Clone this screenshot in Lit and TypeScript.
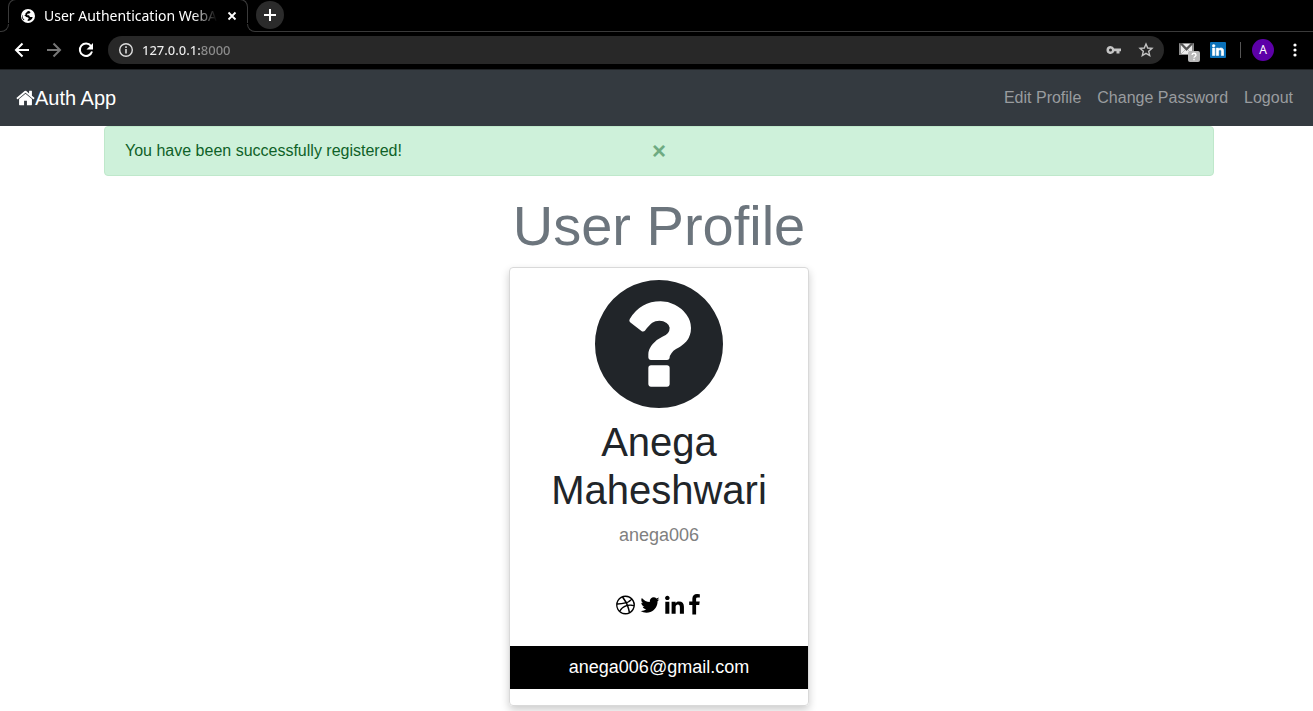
import { LitElement, html, css, svg } from "lit";
import { customElement, state } from "lit/decorators.js";

const HOME =
  "M1472 992v480q0 26-19 45t-45 19h-384v-384h-256v384h-384q-26 0-45-19t-19-45v-480q0-1 .5-3t.5-3l575-474 575 474q1 2 1 6zm223-69l-62 74q-8 9-21 11h-3q-13 0-21-7l-692-577-692 577q-12 8-24 7-13-2-21-11l-62-74q-8-10-7-23.5t11-21.5l719-599q32-26 76-26t76 26l244 204v-195q0-14 9-23t23-9h192q14 0 23 9t9 23v408l219 182q10 8 11 21.5t-7 23.5z";
const QUESTION =
  "M1024 1376v-192q0-14-9-23t-23-9h-192q-14 0-23 9t-9 23v192q0 14 9 23t23 9h192q14 0 23-9t9-23zm256-672q0-88-55.5-163t-138.5-116-170-41q-243 0-371 213-15 24 8 42l132 100q7 6 19 6 16 0 25-12 53-68 86-92 34-24 86-24 48 0 85.5 26t37.5 59q0 38-20 61t-68 45q-63 28-115.5 86.5t-52.5 125.5v36q0 14 9 23t23 9h192q14 0 23-9t9-23q0-19 21.5-49.5t54.5-49.5q32-18 49-28.5t46-35 44.5-48 28-60.5 12.5-81zm384 192q0 209-103 385.5t-279.5 279.5-385.5 103-385.5-103-279.5-279.5-103-385.5 103-385.5 279.5-279.5 385.5-103 385.5 103 279.5 279.5 103 385.5z";
const DRIBBBLE =
  "M1152 1500q-42-241-140-498h-2l-2 1q-16 6-43 16.5t-101 49-137 82-131 114.5-103 148l-15-11q184 150 418 150 132 0 256-52zm-185-607q-21-49-53-111-311 93-673 93-1 7-1 21 0 124 44 236.5t124 201.5q50-89 123.5-166.5t142.5-124.5 130.5-81 99.5-48l37-13q4-1 13-3.5t13-4.5zm-107-212q-120-213-244-378-138 65-234 186t-128 272q302 0 606-80zm684 319q-210-60-409-29 87 239 128 469 111-75 185-189.5t96-250.5zm-803-741q-1 0-2 1 1-1 2-1zm590 145q-185-164-433-164-76 0-155 19 131 170 246 382 69-26 130-60.5t96.5-61.5 65.5-57 37.5-40.5zm223 485q-3-232-149-410l-1 1q-9 12-19 24.5t-43.5 44.5-71 60.5-100 65-131.5 64.5q25 53 44 95 2 5 6.5 17t7.5 17q36-5 74.5-7t73.5-2 69 1.5 64 4 56.5 5.5 48 6.5 36.5 6 25 4.5zm112 7q0 209-103 385.5t-279.5 279.5-385.5 103-385.5-103-279.5-279.5-103-385.5 103-385.5 279.5-279.5 385.5-103 385.5 103 279.5 279.5 103 385.5z";
const TWITTER =
  "M1684 408q-67 98-162 167 1 14 1 42 0 130-38 259.5t-115.5 248.5-184.5 210.5-258 146-323 54.5q-271 0-496-145 35 4 78 4 225 0 401-138-105-2-188-64.5t-114-159.5q33 5 61 5 43 0 85-11-112-23-185.5-111.5t-73.5-205.5v-4q68 38 146 41-66-44-105-115t-39-154q0-88 44-163 121 149 294.5 238.5t371.5 99.5q-8-38-8-74 0-134 94.5-228.5t228.5-94.5q140 0 236 102 109-21 205-78-37 115-142 178 93-10 186-50z";
const LINKEDIN =
  "M477 625v991h-330v-991h330zm21-306q1 73-50.5 122t-135.5 49h-2q-82 0-132-49t-50-122q0-74 51.5-122.5t134.5-48.5 133 48.5 51 122.5zm1166 729v568h-329v-530q0-105-40.5-164.5t-126.5-59.5q-63 0-105.5 34.5t-63.5 85.5q-11 30-11 81v553h-329q2-399 2-647t-1-296l-1-48h329v144h-2q20-32 41-56t56.5-52 87-43.5 114.5-15.5q171 0 275 113.5t104 332.5z";
const FACEBOOK =
  "M1343 12v264h-157q-86 0-116 36t-30 108v189h293l-39 296h-254v759h-306v-759h-255v-296h255v-218q0-186 104-288.5t277-102.5q147 0 228 12z";

const SOCIAL = [
  { name: "Dribbble", path: DRIBBBLE, box: "128 0 1536 1792", width: 19 },
  { name: "Twitter", path: TWITTER, box: "64 0 1664 1792", width: 20 },
  { name: "LinkedIn", path: LINKEDIN, box: "128 0 1536 1792", width: 19 },
  { name: "Facebook", path: FACEBOOK, box: "479 0 1024 1792", width: 13 },
];

@customElement("browser-bar")
class BrowserBar extends LitElement {
  static styles = css`
    :host { display: block; background: #000; color: #fff; font: 14px/20px "Noto Sans", sans-serif; }
    button { display: grid; place-items: center; border: 0; padding: 0; margin: 0; background: none; color: inherit; font: inherit; }
    svg { display: block; }
    .strip { display: flex; height: 32px; align-items: flex-end; overflow: hidden; }
    .foot { box-sizing: border-box; height: 8px; width: 9px; flex: none; border: 0 solid #3a3a3a; border-bottom-width: 1px; }
    .foot-left { border-right-width: 1px; border-radius: 0 0 8px 0; margin-right: -1px; }
    .foot-right { border-left-width: 1px; border-radius: 0 0 0 8px; margin-left: -1px; }
    .tab { box-sizing: border-box; display: flex; align-items: center; align-self: flex-start; width: 240px; height: 32px; margin-top: -1px; padding: 0 7px 0 11px; border: 1px solid #3a3a3a; border-bottom: 0; border-radius: 8px 8px 0 0; clip-path: inset(0 0 8px 0); }
    .title { flex: 1; min-width: 0; margin: 0 7px 0 8px; overflow: hidden; white-space: nowrap; -webkit-mask-image: linear-gradient(90deg, #000 86%, transparent); mask-image: linear-gradient(90deg, #000 86%, transparent); }
    .rest { flex: 1; height: 32px; box-sizing: border-box; border-bottom: 1px solid #3a3a3a; }
    .new { width: 28px; height: 28px; border-radius: 50%; background: #2b2b2b; margin-top: 1px; }
    .tools { display: flex; align-items: center; height: 38px; padding: 0 9px 1px 12px; box-sizing: border-box; border-bottom: 1px solid #202326; }
    .nav { display: flex; gap: 12px; margin-right: 12px; }
    .nav button { width: 20px; height: 20px; }
    .dim { color: #777; }
    .address { flex: 1; display: flex; align-items: center; height: 28px; margin: 0; padding: 0 9px 0 10px; border-radius: 14px; background: #282828; color: #c4c4c4; }
    .url { flex: 1; min-width: 0; height: 20px; border: 0; padding: 0; margin: 0 8px; outline: none; font: 500 13px/20px "Noto Sans", sans-serif; color: transparent; caret-color: #fff; background: linear-gradient(90deg, #eee 58px, #8c8c8c 58px); -webkit-background-clip: text; background-clip: text; }
    .star { margin-left: 14px; }
    .extensions { display: flex; align-items: center; margin-left: 13px; }
    .mail { width: 24px; }
    .linked { margin-left: 9px; }
    .divider { width: 1px; height: 16px; margin: 0 11px 0 14px; background: #555; }
    .avatar { width: 22px; height: 22px; border-radius: 50%; background: #5d00a8; font-size: 12px; line-height: 16px; }
    .menu { width: 18px; margin-left: 12px; }
  `;

  render() {
    return html`
      <div class="strip">
        <div class="foot foot-left"></div>
        <div class="tab">
          <svg width="16" height="16" viewBox="0 0 16 16">
            <circle cx="8" cy="8" r="7" fill="#fff" />
            <path d="M8 3.1q1.800 0 2.600 1.200l-1.200 1.300-2 .2-.3 1.500H9l1 1.700h2.700q-.3 2.600-2.700 3.600L7.700 13v-1.300l1-.9-.5-1.300-2-.5-2-2H2.300q-.1 3 2.200 5l-1 .3Q1.400 10 2 7h3.400V5.400Z" fill="#000" />
          </svg>
          <span class="title">User Authentication WebApp</span>
          <button aria-label="Close tab">
            <svg width="16" height="16" viewBox="0 0 16 16" stroke="#fff" stroke-width="1.800" fill="none"><path d="m4.500 4.500 7 7m0-7-7 7" /></svg>
          </button>
        </div>
        <div class="foot foot-right"></div>
        <div class="rest">
          <button class="new" aria-label="New tab">
            <svg width="14" height="14" viewBox="0 0 14 14" stroke="#fff" stroke-width="2"><path d="M7 1v12M1 7h12" /></svg>
          </button>
        </div>
      </div>
      <div class="tools">
        <div class="nav">
          <button aria-label="Back">
            <svg width="16" height="16" viewBox="0 0 16 16" stroke="currentColor" stroke-width="2" fill="none"><path d="M15 8H2m6.500-6.500L2 8l6.500 6.500" /></svg>
          </button>
          <button class="dim" aria-label="Forward">
            <svg width="16" height="16" viewBox="0 0 16 16" stroke="currentColor" stroke-width="2" fill="none"><path d="M1 8h13M7.500 1.500 14 8l-6.500 6.500" /></svg>
          </button>
          <button aria-label="Reload">
            <svg width="16" height="16" viewBox="0 0 16 16"><path d="M13 4A6.200 6.200 0 1 0 14 9.500" stroke="#fff" stroke-width="2" fill="none" /><path d="M15 1v6.500H8.500Z" fill="#fff" /></svg>
          </button>
        </div>
        <form class="address" @submit=${(e: Event) => e.preventDefault()}>
          <svg width="16" height="16" viewBox="0 0 16 16"><circle cx="8" cy="8" r="6.300" stroke="#ddd" stroke-width="1.400" fill="none" /><path d="M7.200 7h1.600v4.500H7.200zm0-2.700h1.600v1.600H7.200z" fill="#ddd" /></svg>
          <input class="url" aria-label="Address" value="127.0.0.1:8000" />
          <button type="button" aria-label="Saved passwords">
            <svg width="18" height="16" viewBox="0 0 18 16"><path fill="#c4c4c4" fill-rule="evenodd" d="M5.500 4a4 4 0 1 0 3.800 5.200h2.200V11.500h3V9.200h1.500V6.600H9.200A4 4 0 0 0 5.500 4Zm0 2.500a1.500 1.500 0 1 1 0 3 1.500 1.500 0 0 1 0-3Z" /></svg>
          </button>
          <button type="button" class="star" aria-label="Bookmark">
            <svg width="18" height="18" viewBox="0 0 18 18"><path d="m9 3 1.700 4 4.300.4-3.300 2.900 1 4.300L9 12.300l-3.700 2.300 1-4.300L3 7.400 7.300 7Z" fill="none" stroke="#c4c4c4" stroke-width="1.400" /></svg>
          </button>
        </form>
        <div class="extensions">
          <button class="mail" aria-label="Mail">
            <svg width="24" height="24" viewBox="0 0 24 24"><path d="M2 5h15v12H2Z" fill="#8a8a8a" /><path d="M4 6h11v10H4Z" fill="#eee" /><path d="m2 5 7.500 8L17 5h-3L9.500 9.500 5 5Z" fill="#555" /><path d="m4 16 4-4m7 4-4-4" stroke="#bbb" /><rect x="11" y="13" width="12" height="11" rx="2" fill="#b8b8b8" /><path d="M15 17q.2-1.700 2-1.700t2 1.700q0 .8-1 1.500t-1 1.300m0 1v1.500" stroke="#fff" stroke-width="1.400" fill="none" /></svg>
          </button>
          <button class="linked" aria-label="LinkedIn">
            <svg width="16" height="16" viewBox="0 0 16 16"><rect width="16" height="16" rx="1" fill="#0a70b8" /><svg x="2" y="2" width="12" height="12" viewBox="96 100 1600 1560"><path fill="#fff" stroke="#fff" stroke-width="70" d=${LINKEDIN} /></svg></svg>
          </button>
          <span class="divider"></span>
          <button class="avatar" aria-label="Account">A</button>
          <button class="menu" aria-label="Browser menu">
            <svg width="4" height="16" viewBox="0 0 4 16" fill="#fff"><circle cx="2" cy="3" r="1.600" /><circle cx="2" cy="8" r="1.600" /><circle cx="2" cy="13" r="1.600" /></svg>
          </button>
        </div>
      </div>
    `;
  }
}

@customElement("app-root")
class AppRoot extends LitElement {
  static styles = css`
    :host { display: block; min-height: 100vh; background: #fff; color: #212529; font: 16px/24px "Liberation Sans", Arial, sans-serif; }
    a { color: inherit; text-decoration: none; }
    svg { display: block; }
    .navbar { display: flex; align-items: center; justify-content: space-between; height: 56px; padding: 0 20px 0 16px; background: #343a40; }
    .brand { display: flex; align-items: center; color: #fff; font-size: 20px; line-height: 30px; }
    .links { display: flex; gap: 16px; color: #999c9f; }
    .page { padding: 0 15px 0 20px; }
    .container { max-width: 1110px; margin: 0 auto; }
    .alert { display: grid; grid-template-columns: 1fr auto 1fr; align-items: center; padding: 12px 20px; border: 1px solid #bfe8cb; border-radius: 4px; background: #cef1da; color: #0f6128; }
    .close { border: 0; padding: 0; background: none; color: #6eab82; font: bold 24px/24px "Liberation Sans", Arial, sans-serif; }
    .heading { margin: 16px 0 8px; color: #6c757d; font-size: 56px; line-height: 67px; font-weight: 300; text-align: center; }
    .card { box-sizing: border-box; width: 300px; max-width: 100%; margin: 0 auto 5px; padding-bottom: 16px; border: 1px solid #d9d9d9; border-radius: 4px; box-shadow: 0 4px 8px rgba(0, 0, 0, 0.2); text-align: center; }
    .picture { margin: 12px auto 10px; }
    .name { margin: 0 20px 8px; font-size: 40px; line-height: 48px; font-weight: 500; }
    .user { margin: 0; color: #808080; font-size: 18px; line-height: 27px; }
    .social { display: flex; justify-content: center; gap: 5px; margin: 45px 0 30px; color: #000; }
    .mailto { display: block; padding: 8px; background: #000; color: #fff; font-size: 18px; line-height: 27px; }
  `;

  @state() private alertOpen = true;

  render() {
    return html`
      <browser-bar></browser-bar>
      <nav class="navbar">
        <a class="brand" href="#home">
          <svg width="19" height="20" viewBox="64 0 1664 1792" fill="currentColor"><path d=${HOME} /></svg>Auth App</a>
        <div class="links">
          <a href="#edit">Edit Profile</a>
          <a href="#password">Change Password</a>
          <a href="#logout">Logout</a>
        </div>
      </nav>
      <main class="page">
        <div class="container">
          ${this.alertOpen
            ? html`<div class="alert" role="alert">
                <span>You have been successfully registered!</span>
                <button class="close" aria-label="Dismiss" @click=${() => (this.alertOpen = false)}>×</button>
              </div>`
            : ""}
          <h1 class="heading">User Profile</h1>
          <section class="card">
            <svg class="picture" width="128" height="128" viewBox="128 128 1536 1536" fill="currentColor"><path d=${QUESTION} /></svg>
            <h2 class="name">Anega Maheshwari</h2>
            <p class="user">anega006</p>
            <div class="social">
              ${SOCIAL.map(
                (s) => html`<a href="#social" aria-label=${s.name}>
                  <svg width=${s.width} height="22" viewBox=${s.box} fill="currentColor">${svg`<path d=${s.path} />`}</svg>
                </a>`
              )}
            </div>
            <a class="mailto" href="mailto:anega006@gmail.com">anega006@gmail.com</a>
          </section>
        </div>
      </main>
    `;
  }
}
